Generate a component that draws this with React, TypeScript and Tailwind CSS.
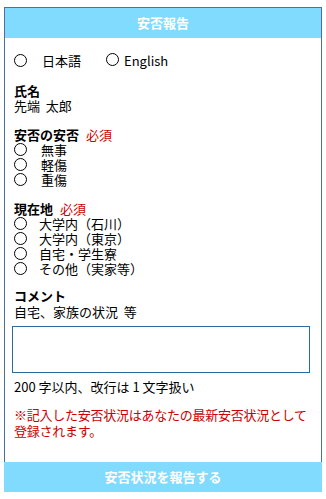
import React from 'react';

const Radio = () => (
  <span className="inline-block w-[13px] h-[13px] rounded-full border border-black bg-white shrink-0" />
);

function RadioRow({ label, gap = 'ml-[14px]' }: { label: string; gap?: string }) {
  return (
    <div className="flex items-center h-[15px] leading-[15px]">
      <Radio />
      <span className={gap}>{label}</span>
    </div>
  );
}

const Required = () => <span className="ml-[7px] font-normal text-[#cc0000]">必須</span>;

export default function App() {
  const safety = ['無事', '軽傷', '重傷'];
  const places = ['大学内（石川）', '大学内（東京）', '自宅・学生寮', 'その他（実家等）'];

  return (
    <div
      className="w-[326px] h-[499px] bg-white pt-[7px] pl-[4px] text-[13px] text-black"
      style={{ fontFamily: '"Noto Sans CJK JP", "Noto Sans", sans-serif' }}
    >
      <div className="w-[318px]">
        <div className="border-x border-t border-[#4d6f9e]">
          <div className="h-[30px] bg-[#80dbff] flex items-center justify-center text-white font-bold text-[13px]">
            安否報告
          </div>
          <div className="px-[9px] pt-[15px] pb-[23px]">
            <div className="flex items-center h-[15px] leading-[15px]">
              <Radio />
              <span className="ml-[15px]">日本語</span>
              <span className="ml-[25px]"><Radio /></span>
              <span className="ml-[5px]">English</span>
            </div>

            <div className="mt-[15px] font-bold leading-[15px]">氏名</div>
            <div className="leading-[15px]">先端&nbsp;&nbsp;太郎</div>

            <div className="mt-[14px] font-bold leading-[15px]">
              安否の安否<Required />
            </div>
            {safety.map((s) => (
              <RadioRow key={s} label={s} />
            ))}

            <div className="mt-[14px] font-bold leading-[15px]">
              現在地<Required />
            </div>
            {places.map((p) => (
              <RadioRow key={p} label={p} gap="ml-[12px]" />
            ))}

            <div className="mt-[12px] font-bold leading-[16px]">コメント</div>
            <div className="leading-[16px]">自宅、家族の状況&nbsp;&nbsp;等</div>
            <textarea className="block mt-[6px] -ml-[2px] w-[298px] h-[47px] border border-[#2b6a9c] resize-none outline-none" />
            <div className="mt-[6px] leading-[15px]">200 字以内、改行は 1 文字扱い</div>

            <div className="mt-[13px] leading-[16px] tracking-[-0.25px] text-[#cc0000]">
              ※記入した安否状況はあなたの最新安否状況として登録されます。
            </div>
          </div>
        </div>
        <button className="w-[318px] h-[30px] bg-[#80dbff] text-white font-bold text-[13px] flex items-center justify-center">
          安否状況を報告する
        </button>
      </div>
    </div>
  );
}
